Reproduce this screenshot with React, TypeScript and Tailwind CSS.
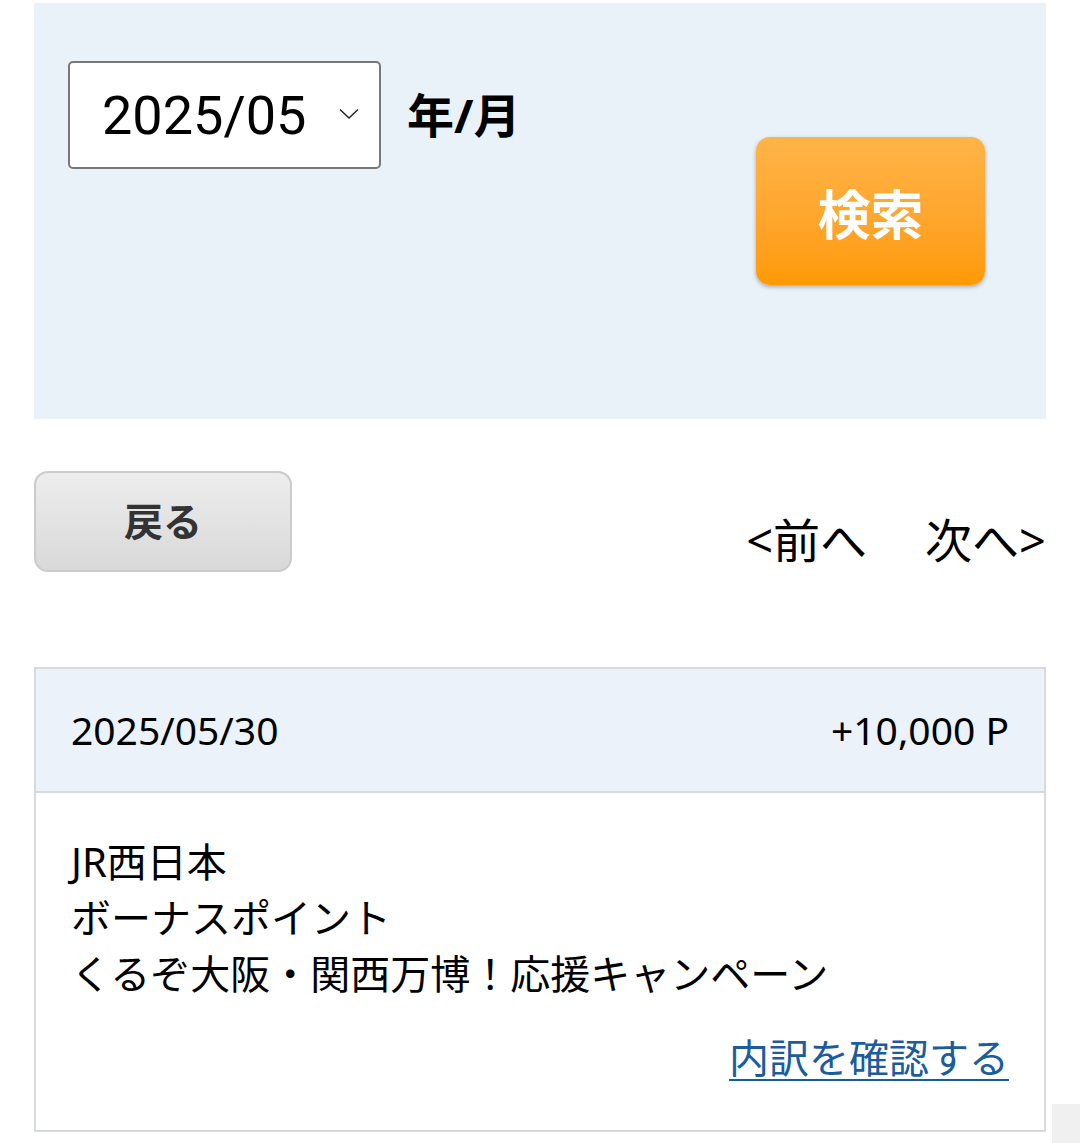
import { useState } from 'react'

/* Data */
const history = [
  {
    date: '2025/05/30',
    point: '+10,000 P',
    lines: ['JR西日本', 'ボーナスポイント', 'くるぞ大阪・関西万博！応援キャンペーン'],
  },
]

const App: React.FC = () => {
  const [month, setMonth] = useState<string>('2025/05')

  return (
    <div className="relative min-h-[1143px] bg-white pt-[3px] font-['Noto_Sans','Noto_Sans_CJK_JP',sans-serif] text-black">
      <div className="mx-[34px]">
        {/* SEARCH */}
        <div className="flex h-[416px] justify-between bg-[#eaf2f9] pl-[34px] pr-[61px] pt-[58px]">
          <div className="flex h-[108px] items-center gap-[26px]">
            <div className="relative h-[108px] w-[313px]">
              <select
                value={month}
                onChange={(e) => setMonth(e.target.value)}
                className="h-full w-full appearance-none rounded-[5px] border-2 border-[#777] bg-white pl-[32px] font-['Roboto',sans-serif] text-[54px] text-black outline-none">
                <option value="2025/05">2025/05</option>
                <option value="2025/04">2025/04</option>
              </select>
              <svg
                className="pointer-events-none absolute right-[22px] top-[47px]"
                width="20"
                height="12"
                viewBox="0 0 20 12"
                fill="none"
                stroke="#222"
                strokeWidth="1.5">
                <path d="M1 1.5 L10 10 L19 1.5" />
              </svg>
            </div>
            <span className="text-[47px] font-bold">年/月</span>
          </div>
          <button className="mt-[76px] h-[148px] w-[229px] rounded-[14px] bg-gradient-to-b from-[#ffb447] to-[#ff9a00] pt-[8px] text-[53px] font-bold text-white shadow-[0_2px_4px_rgba(0,0,0,0.3)]">
            検索
          </button>
        </div>

        {/* NAV */}
        <div className="mt-[52px] flex items-start justify-between">
          <button className="h-[101px] w-[258px] rounded-[14px] border-2 border-[#cbcbcb] bg-gradient-to-b from-[#ededed] to-[#d9d9d9] text-[39px] font-bold text-[#333]">
            戻る
          </button>
          <div className="mt-[36px] flex gap-[58px] text-[47px] leading-[66px]">
            <a className="cursor-pointer">&lt;前へ</a>
            <a className="cursor-pointer">次へ&gt;</a>
          </div>
        </div>

        {/* LIST */}
        <ul className="mt-[94px]">
          {history.map((item, id) => {
            return (
              <li key={id} className="border-2 border-[#d6dadd]">
                <div className="flex h-[124px] items-center justify-between border-b-2 border-[#d6dadd] bg-[#ebf2f9] px-[35px] text-[39px]">
                  <span>{item.date}</span>
                  <span>{item.point}</span>
                </div>
                <div className="px-[35px] pb-[44px] pt-[41px] text-[40px] leading-[56px]">
                  {item.lines.map((line, i) => (
                    <div key={i}>{line}</div>
                  ))}
                  <div className="mt-[28px] text-right">
                    <a className="cursor-pointer text-[#1b5c9e] underline decoration-2 underline-offset-[6px]">内訳を確認する</a>
                  </div>
                </div>
              </li>
            )
          })}
        </ul>
      </div>
      <div className="absolute right-0 top-[1104px] h-[39px] w-[28px] bg-[#f0f0f0]" />
    </div>
  )
}

export default App
